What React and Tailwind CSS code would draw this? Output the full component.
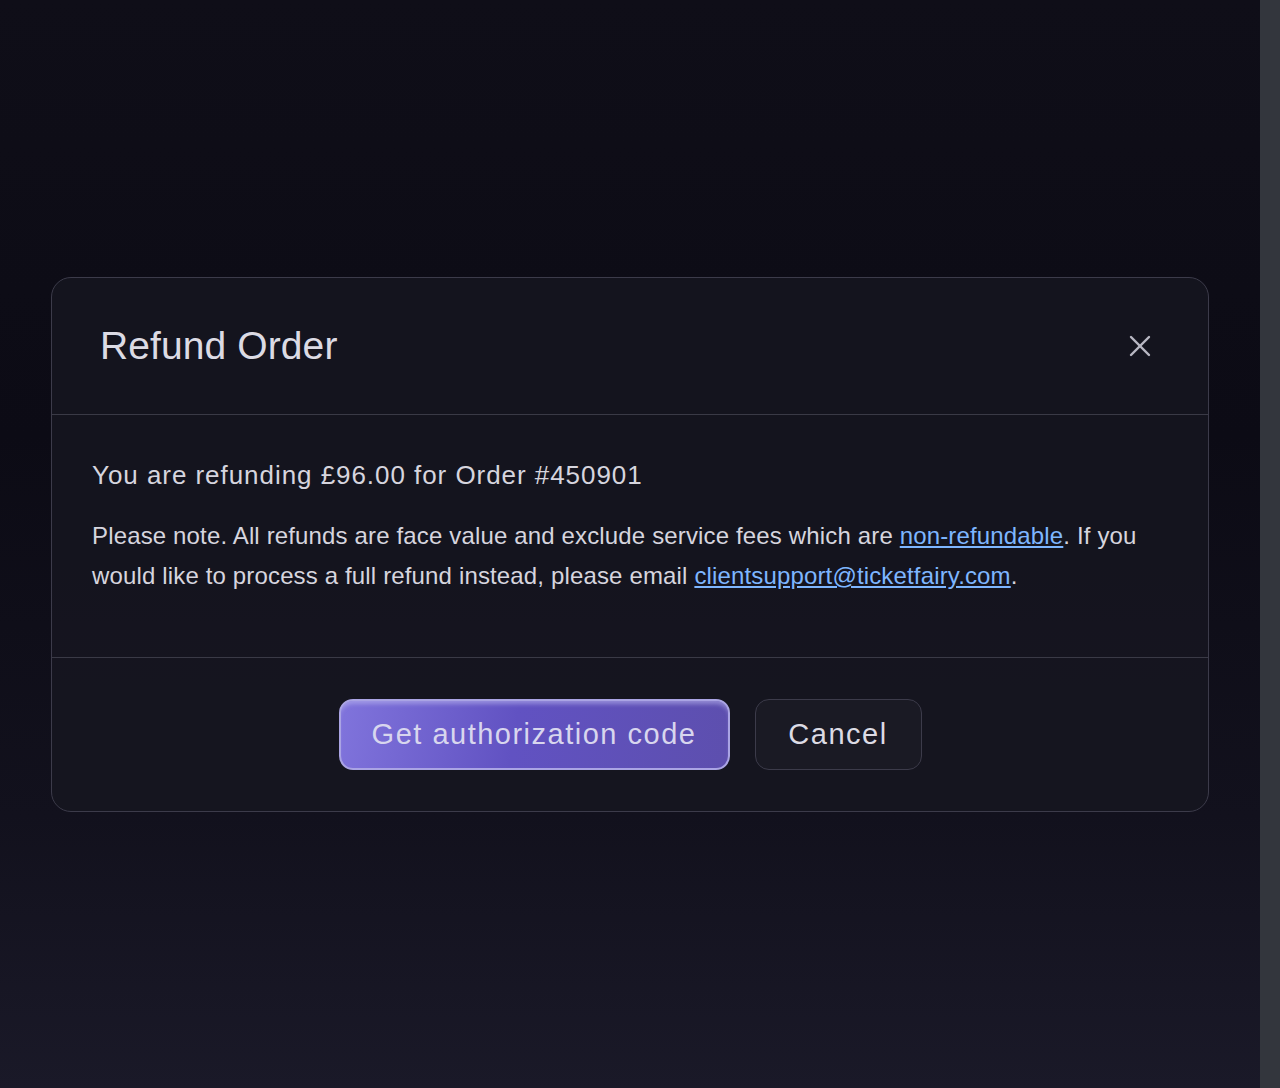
import { X } from "lucide-react";

const App = () => {
  return (
    <div
      className="flex min-h-[1088px] w-full bg-[linear-gradient(180deg,#0f0e18_0%,#0c0b15_40%,#12111d_75%,#1a1928_100%)]"
      style={{ fontFamily: '"Liberation Sans", Arial, sans-serif' }}
    >
      {/* Page */}
      <div className="flex-1 pt-[277px] pl-[51px] pr-[51px]">
        <div className="w-[1158px] rounded-[20px] border border-[#3c3b4a] bg-[#161620]/80">
          {/* Header */}
          <div className="flex h-[137px] items-center justify-between border-b border-[#3a3a46] pl-[48px] pr-[50px]">
            <h2 className="text-[39px] font-normal tracking-[0.1px] text-[#dcdbe4]">Refund Order</h2>
            <button className="text-[#b9b8c3]">
              <X size={36} strokeWidth={1.6} />
            </button>
          </div>

          {/* Body */}
          <div className="border-b border-[#3a3a46] px-[40px] pt-[42px] pb-[61px] text-[#d6d5de]">
            <p className="text-[26px] leading-[36px] tracking-[0.95px]">
              You are refunding £96.00 for Order #450901
            </p>
            <p className="mt-[23px] text-[24px] leading-[40px] tracking-[0.15px]">
              Please note. All refunds are face value and exclude service fees which are{" "}
              <a href="#" className="text-[#7eb6ff] underline">
                non-refundable
              </a>
              . If you would like to process a full refund instead, please email{" "}
              <a href="#" className="text-[#7eb6ff] underline">
                clientsupport@ticketfairy.com
              </a>
              .
            </p>
          </div>

          {/* Footer */}
          <div className="flex justify-center gap-[25px] py-[41px]">
            <button className="h-[71px] w-[391px] rounded-[14px] border-2 border-[#aaa4e4] bg-[linear-gradient(100deg,#8074dc_0%,#6152c2_45%,#5d4fae_100%)] text-[29px] tracking-[1.5px] text-[#d8d6ee] shadow-[inset_0_5px_4px_-2px_rgba(190,185,240,0.55)]">
              Get authorization code
            </button>
            <button className="h-[71px] w-[167px] rounded-[14px] border border-[#3c3b4a] bg-[#1a1a24] text-[29px] tracking-[1.5px] text-[#dcdbe4]">
              Cancel
            </button>
          </div>
        </div>
      </div>

      {/* Scrollbar track */}
      <div className="w-[20px] shrink-0 bg-[#33363d]" />
    </div>
  );
};

export default App;
